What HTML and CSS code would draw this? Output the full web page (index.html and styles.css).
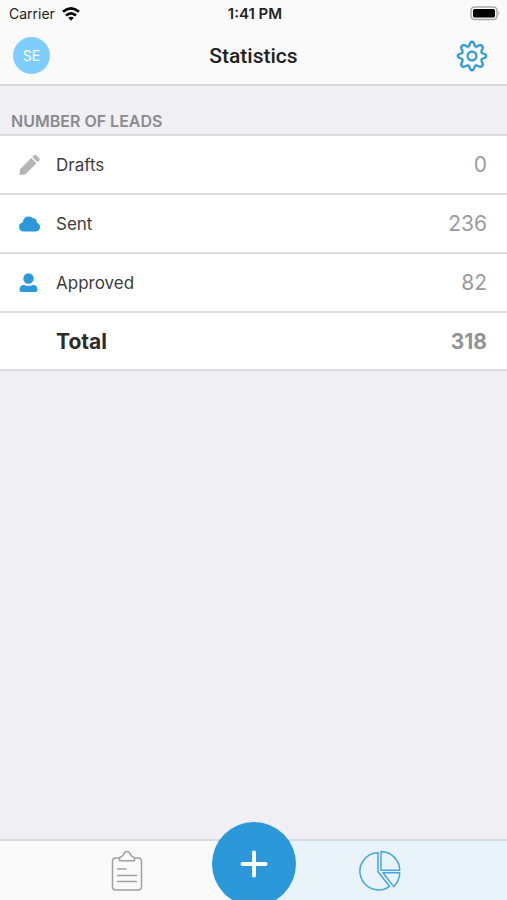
FILE: index.html
```html
<!DOCTYPE html>
<html lang="en">
<head>
    <meta charset="UTF-8">
    <meta name="viewport" content="width=device-width, initial-scale=1.0">
    <title>Statistics</title>
    <link rel="stylesheet" href="styles.css">
</head>
<body>
    <header class="header">
        <div class="status-bar">
            <div class="carrier">
                <span>Carrier</span>
                <svg width="18" height="14" viewBox="0 0 18 14" fill="none" stroke="#000" stroke-width="2.700">
                    <path d="M1 4.800Q9 -2 17 4.800"/>
                    <path d="M4 8.600Q9 4.200 14 8.600"/>
                    <path d="M6.200 10.800Q9 8.500 11.800 10.800L9 13.800Z" fill="#000" stroke="none"/>
                </svg>
            </div>
            <span class="time">1:41 PM</span>
            <svg class="battery" width="31" height="15" viewBox="0 0 31 15">
                <rect x="1" y="1" width="26" height="12.500" rx="3.500" fill="#fafafa" stroke="#aaa" stroke-width="1.500"/>
                <rect x="3" y="3" width="22" height="8.500" rx="1.500" fill="#000"/>
                <path d="M28.500 5q2 2.200 0 4.500z" fill="#aaa"/>
            </svg>
        </div>
        <div class="nav-bar">
            <button type="button" class="avatar">SE</button>
            <h1>Statistics</h1>
            <button type="button" class="icon-button" aria-label="Settings">
                <svg width="32" height="32" viewBox="0 0 32 32" fill="none" stroke="#2b99d9" stroke-width="2.200" stroke-linejoin="round">
                    <path d="M13.500 5.200C14 2.400 14.500 1.700 16 1.700S18 2.400 18.500 5.200Q19.200 7.200 21.300 6.400C23.700 4.700 25 4.800 26.100 5.900S27.300 8.300 25.600 10.700Q24.800 12.800 26.800 13.500C29.600 14 30.300 14.500 30.300 16S29.600 18 26.800 18.500Q24.800 19.200 25.600 21.300C27.300 23.700 27.200 25 26.100 26.100S23.700 27.300 21.300 25.600Q19.200 24.800 18.500 26.800C18 29.600 17.500 30.300 16 30.300S14 29.600 13.500 26.800Q12.800 24.800 10.700 25.600C8.300 27.300 7 27.200 5.900 26.100S4.700 23.700 6.400 21.300Q7.200 19.200 5.200 18.500C2.400 18 1.700 17.500 1.700 16S2.400 14 5.200 13.500Q7.200 12.800 6.400 10.700C4.700 8.300 4.800 7 5.900 5.900S8.300 4.700 10.700 6.400Q12.800 7.200 13.500 5.200Z"/>
                    <circle cx="16" cy="16" r="4.400"/>
                </svg>
            </button>
        </div>
    </header>

    <main class="content">
        <h2>NUMBER OF LEADS</h2>
        <ul class="stats">
            <li>
                <svg class="draft-icon" width="22" height="22" viewBox="0 0 22 22">
                    <path d="M0.500 21L0.900 16Q1 15.300 1.500 14.800L12.200 4.100L17.400 9.300L6.700 20Q6.200 20.500 5.500 20.600Z"/>
                    <path d="M13.300 3L15.100 1.200Q16.300 0.200 17.500 1.300L20.300 4.100Q21.300 5.300 20.200 6.500L18.500 8.200Z"/>
                </svg>
                <span class="label">Drafts</span>
                <span class="value">0</span>
            </li>
            <li>
                <svg width="22" height="22" viewBox="0 0 22 22">
                    <path d="M5 18.500Q0 18.200 0 13.700Q0 10.300 3.800 9.300Q4.500 3.500 9.800 3.500Q12.200 3.500 14 5.300Q17.800 5.300 17.800 9.500Q21 10.700 21 14Q21 18 16.500 18.500Z"/>
                </svg>
                <span class="label">Sent</span>
                <span class="value">236</span>
            </li>
            <li>
                <svg width="22" height="22" viewBox="0 0 22 22">
                    <circle cx="9.500" cy="6.500" r="5.200"/>
                    <path d="M0.500 18Q0.500 13 5 13Q9.500 14.700 14 13Q18.500 13 18.500 18Q18.500 20 16.500 20H2.500Q0.500 20 0.500 18Z"/>
                </svg>
                <span class="label">Approved</span>
                <span class="value">82</span>
            </li>
            <li class="total">
                <span class="label">Total</span>
                <span class="value">318</span>
            </li>
        </ul>
    </main>

    <nav class="tab-bar">
        <button type="button" class="tab" aria-label="Leads">
            <svg width="32" height="42" viewBox="0 0 32 42" fill="none" stroke="#a0a0a0" stroke-width="1.500" stroke-linecap="round" stroke-linejoin="round">
                <path d="M8.500 8H5Q1.500 8 1.500 11.500V36.500Q1.500 40 5 40H27Q30.500 40 30.500 36.500V11.500Q30.500 8 27 8H23.500"/>
                <path d="M8.500 10.700V8.500Q8.500 7 10.500 6.500Q12.200 6 12.500 4.500Q13.200 1.500 16 1.500T19.500 4.500Q19.800 6 21.500 6.500Q23.500 7 23.500 8.500V10.700Z"/>
                <path d="M6.500 19H15M6.500 25.500H25.500M6.500 31.500H25.500"/>
            </svg>
        </button>
        <button type="button" class="tab active" aria-label="Statistics">
            <svg width="42" height="42" viewBox="0 0 42 42" fill="none" stroke="#45a5df" stroke-width="1.500" stroke-linejoin="round">
                <path d="M19 2.700A18.600 18.600 0 1 0 30.500 36.300L19 21.700Z"/>
                <path d="M22 1.500V20.300H40.700A19 19 0 0 0 22 1.500Z"/>
                <path d="M24 22.800H40.700Q40.500 31 34.700 36.600Z"/>
            </svg>
        </button>
        <button type="button" class="add-button" aria-label="Add lead">
            <svg width="28" height="28" viewBox="0 0 28 28" stroke="#fff" stroke-width="4" stroke-linecap="round">
                <path d="M14 2.500V25.500M2.500 14H25.500"/>
            </svg>
        </button>
    </nav>
</body>
</html>
```
FILE: styles.css
```css
* {
    box-sizing: border-box;
}

body {
    font-family: Inter, "Liberation Sans", sans-serif;
    margin: 0;
    background-color: #efeff4;
    color: #3c3c3c;
    display: flex;
    flex-direction: column;
    height: 100vh;
    overflow: hidden;
}

button {
    border: none;
    padding: 0;
    background: none;
    cursor: pointer;
}

svg {
    display: block;
    flex-shrink: 0;
}

.header {
    background: #fafafa;
    border-bottom: 2px solid #dadadd;
}

.status-bar {
    display: grid;
    grid-template-columns: 1fr auto 1fr;
    align-items: center;
    height: 27px;
    padding: 0 6px 0 9px;
    font-size: 14px;
    color: #222222;
}

.carrier {
    display: flex;
    align-items: center;
    gap: 7px;
}

.time {
    font-size: 15px;
    font-weight: 600;
}

.battery {
    justify-self: end;
}

.nav-bar {
    display: grid;
    grid-template-columns: 1fr auto 1fr;
    align-items: center;
    height: 57px;
    padding: 0 19px 0 13px;
}

.avatar {
    width: 37px;
    height: 37px;
    border-radius: 50%;
    background: #7dceff;
    color: #ffffff;
    font-family: inherit;
    font-size: 14px;
}

.nav-bar h1 {
    margin: 0 0 0 6px;
    font-family: Roboto, sans-serif;
    font-size: 21px;
    font-weight: 500;
    color: #222222;
}

.icon-button {
    justify-self: end;
}

.content {
    flex: 1;
}

.content h2 {
    margin: 0;
    padding: 25px 11px 2px;
    border-bottom: 2px solid #dcdce0;
    font-size: 16px;
    line-height: 21px;
    font-weight: 600;
    color: #8b8b8f;
}

.stats {
    list-style: none;
    margin: 0;
    padding: 0;
}

.stats li {
    display: flex;
    align-items: center;
    height: 59px;
    padding: 0 20px 0 19px;
    border-bottom: 2px solid #dddddf;
    background: #ffffff;
    fill: #2b99d9;
}

.stats .draft-icon {
    fill: #b5b5b5;
}

.label {
    flex: 1;
    padding-left: 15px;
    font-size: 17px;
}

.value {
    font-size: 21px;
    color: #9b9b9f;
}

.stats .total {
    height: 58px;
    padding-left: 41px;
    font-weight: 700;
}

.total .label {
    font-size: 21px;
    color: #2c2c2c;
}

.total .value {
    color: #929295;
}

.tab-bar {
    position: relative;
    display: flex;
    height: 61px;
    border-top: 2px solid #d5d9de;
    background: #fafafa;
}

.tab {
    flex: 1;
    display: flex;
    justify-content: center;
    align-items: center;
}

.tab.active {
    background: #e8f4fa;
}

/* sits over both tabs and runs off the bottom edge */
.add-button {
    position: absolute;
    top: -19px;
    left: calc(50% - 42px);
    display: flex;
    justify-content: center;
    align-items: center;
    width: 84px;
    height: 84px;
    border-radius: 50%;
    background: #2b99d9;
}
```
